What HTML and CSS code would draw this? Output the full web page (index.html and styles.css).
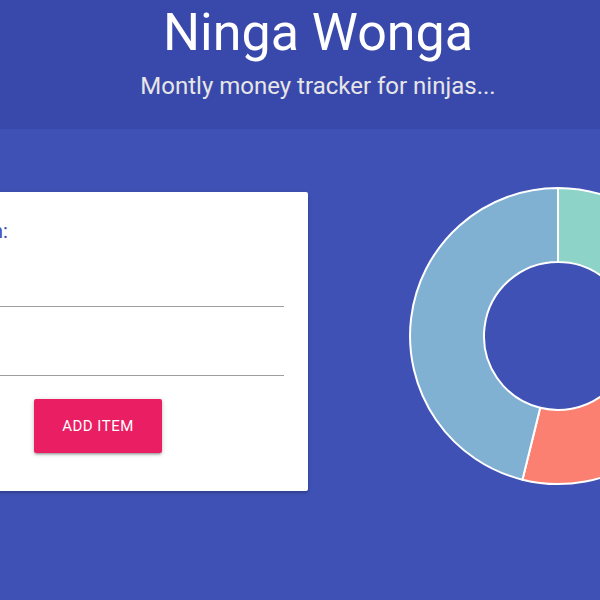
FILE: index.html
```html
<!DOCTYPE html>
<html>
<head>
<meta charset="utf-8">
<link rel="stylesheet" href="styles.css">
</head>
<body>
<header class="header">
  <h1 class="title">Ninga Wonga</h1>
  <p class="subtitle">Montly money tracker for ninjas...</p>
</header>
<main class="main">
  <section class="card">
    <div class="card-content">
      <div class="form-label">Add an item:</div>
      <div class="input-field first"></div>
      <div class="input-field second"></div>
      <div class="btn-row">
        <button class="btn">ADD ITEM</button>
      </div>
    </div>
  </section>
  <div class="chart">
    <svg width="300" height="300" viewBox="0 0 300 300">
      <g stroke="#ffffff" stroke-width="2" stroke-linejoin="round">
        <path fill="#8dd3c7" d="M150 2 A148 148 0 0 1 298 150 L224 150 A74 74 0 0 0 150 76 Z"/>
        <path fill="#fb8072" d="M298 150 A148 148 0 0 1 114.45 293.66 L132.22 221.83 A74 74 0 0 0 224 150 Z"/>
        <path fill="#80b1d3" d="M114.45 293.66 A148 148 0 0 1 150 2 L150 76 A74 74 0 0 0 132.22 221.83 Z"/>
      </g>
    </svg>
  </div>
</main>
</body>
</html>
```
FILE: styles.css
```css
html, body {
  margin: 0;
  padding: 0;
}
body {
  background: #3f51b5;
  font-family: Roboto, "Liberation Sans", sans-serif;
  overflow: hidden;
  height: 600px;
}
.header {
  background: #3949ab;
  height: 129px;
  box-sizing: border-box;
  padding-left: 36px;
  padding-top: 2px;
  text-align: center;
  color: #ffffff;
}
.title {
  margin: 0;
  font-size: 52px;
  font-weight: 400;
  line-height: 62px;
}
.subtitle {
  margin: 6px 0 0 0;
  font-size: 24px;
  line-height: 32px;
  color: #e6e6e6;
}
.main {
  display: flex;
  align-items: flex-start;
  padding-top: 57px;
  gap: 100px;
}
.card {
  flex: none;
  width: 420px;
  margin-left: -112px;
  margin-top: 6px;
  background: #ffffff;
  border-radius: 2px;
  box-shadow: 0 2px 2px 0 rgba(0,0,0,0.14), 0 1px 5px 0 rgba(0,0,0,0.12);
}
.card-content {
  padding: 24px 24px 38px 24px;
}
.form-label {
  margin-left: -16px;
  font-size: 20px;
  line-height: 30px;
  color: #3f51b5;
}
.input-field {
  border-bottom: 1px solid #9e9e9e;
  box-sizing: border-box;
}
.input-field.first {
  height: 61px;
}
.input-field.second {
  height: 69px;
}
.btn-row {
  display: flex;
  justify-content: center;
  margin-top: 23px;
}
.btn {
  width: 128px;
  height: 54px;
  border: none;
  border-radius: 2px;
  background: #e91e63;
  color: #ffffff;
  font-family: Roboto, "Liberation Sans", sans-serif;
  font-size: 15px;
  letter-spacing: 0.5px;
  box-shadow: 0 2px 2px 0 rgba(0,0,0,0.14), 0 3px 1px -2px rgba(0,0,0,0.12), 0 1px 5px 0 rgba(0,0,0,0.2);
  padding: 0;
}
.chart {
  flex: none;
  width: 300px;
  height: 300px;
}
.chart svg {
  display: block;
}
```
